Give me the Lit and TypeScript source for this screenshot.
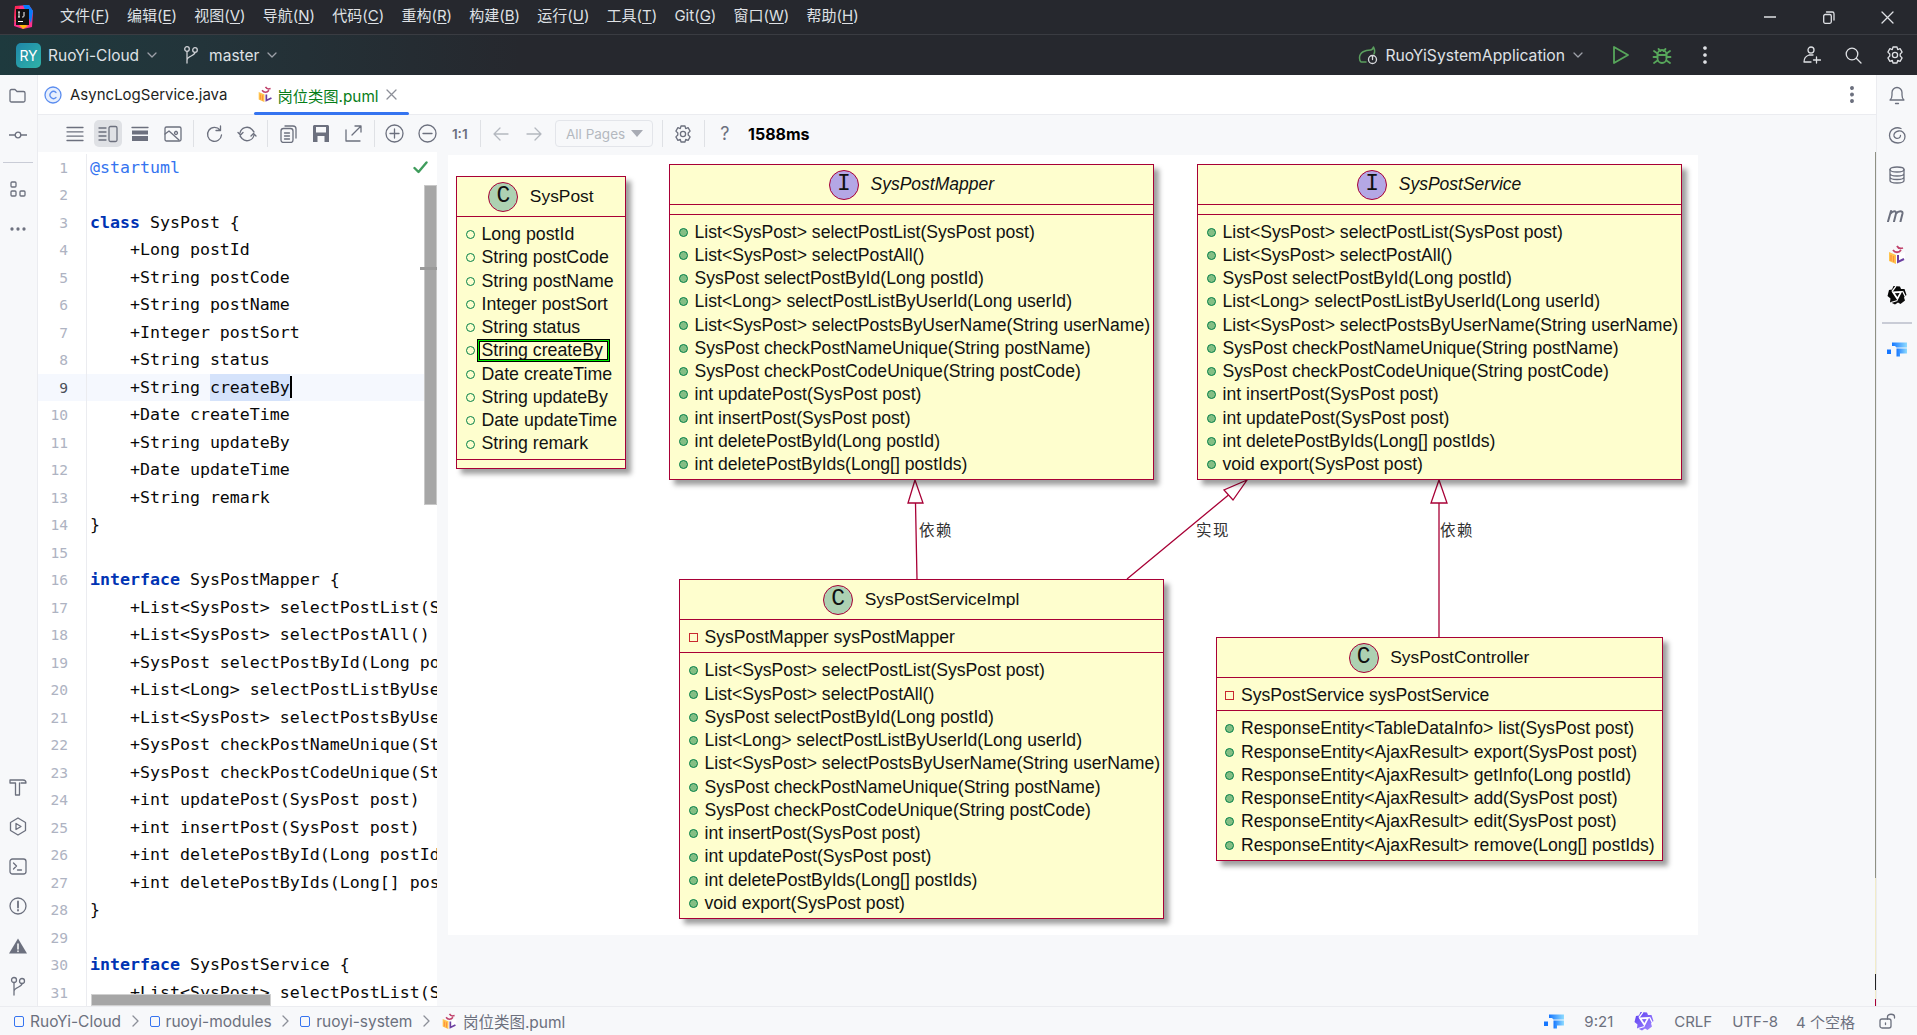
import { LitElement, html, css, svg } from "lit";
import { customElement } from "lit/decorators.js";

const ico = (w: number, h: number, body: unknown, vb = `0 0 ${w} ${h}`) =>
  html`<svg class="ic" width=${w} height=${h} viewBox=${vb} fill="none" stroke="currentColor" stroke-width="1.3" stroke-linecap="round" stroke-linejoin="round">${body}</svg>`;

const chevron = ico(12, 12, svg`<path d="M2 4l4 4 4-4"/>`);
const branch = ico(16, 20, svg`<circle cx="4" cy="4" r="2.3"/><circle cx="12" cy="5" r="2.3"/><path d="M4 6.3V18M12 7.3c0 4-8 3.5-8 8"/>`);
const gear = ico(20, 20, svg`<path d="M8 2h4l.7 2.6 2.4-.9 2 3.4-1.9 1.9.0 2 1.9 1.9-2 3.4-2.4-.9L12 18H8l-.7-2.6-2.4.9-2-3.4 1.9-1.9V9L2.900 7.100l2-3.400 2.400.9z"/><circle cx="10" cy="10" r="2.600"/>`);
const umlCube = (s: number) => html`<svg class="ic" width=${s} height=${s} viewBox="0 0 20 20">
  <path d="M2 7l7 3v9l-7-3z" fill="#ffc44d"/><path d="M4 10v6M6.500 11v6" stroke="#ff8f3f" stroke-width="1.200"/>
  <path d="M9 10l9-3v7l-9 5z" fill="#fff"/><path d="M11 10v7l6-3" fill="none" stroke="#6b3fa0" stroke-width="2"/>
  <path d="M6 5c2 3 6 3 8 0M10 1c1 2 3 3 6 2" fill="none" stroke="#c0406a" stroke-width="1.800"/></svg>`;
const blueMark = html`<svg class="ic" width="20" height="15" viewBox="0 0 20 15">
  <defs><linearGradient id="bm" x1="0" x2="1"><stop offset="0" stop-color="#1677ff"/><stop offset="1" stop-color="#8fdcff"/></linearGradient></defs>
  <rect x="0" y="7.500" width="4" height="4.500" fill="#1677ff"/><path d="M5 0h15v5H9.500L8 3.500H5z" fill="url(#bm)" transform="translate(0 .5)"/><path d="M9.500 6.500H20v5h-7v3H9.500z" fill="url(#bm)"/></svg>`;
const star = (c1: string, c2: string, id: string) => html`<svg class="ic" width="20" height="20" viewBox="0 0 20 20">
  <defs><linearGradient id=${id} x1="0" y1="0" x2="1" y2="1"><stop offset="0" stop-color=${c1}/><stop offset="1" stop-color=${c2}/></linearGradient></defs>
  <path d="M6.500 1L13 1.500 14 4l3.500 0L19.500 10 17 12.500 18 15.500 13.500 19 11 17.500 8 19.500 3 17 3.500 13.500.5 11 2 5 5 4.500z" fill=${`url(#${id})`}/>
  <path d="M4.500 6.500l11-.5-5 9.500zM7.800 8.200l2.600 3.900 2.200-4.200z" fill="#fff" fill-rule="evenodd"/><path d="M5 6.500L9 1.200M15.500 6l3.500 7M10.500 15.500L4 17.500" stroke="#fff" stroke-width="1.300"/></svg>`;

const CODE: string[] = [
  "@startuml", "", "class SysPost {", "    +Long postId", "    +String postCode", "    +String postName", "    +Integer postSort",
  "    +String status", "    +String createBy", "    +Date createTime", "    +String updateBy", "    +Date updateTime", "    +String remark",
  "}", "", "interface SysPostMapper {", "    +List<SysPost> selectPostList(SysPost post)", "    +List<SysPost> selectPostAll()",
  "    +SysPost selectPostById(Long postId)", "    +List<Long> selectPostListByUserId(Long userId)", "    +List<SysPost> selectPostsByUserName(String userName)",
  "    +SysPost checkPostNameUnique(String postName)", "    +SysPost checkPostCodeUnique(String postCode)", "    +int updatePost(SysPost post)",
  "    +int insertPost(SysPost post)", "    +int deletePostById(Long postId)", "    +int deletePostByIds(Long[] postIds)", "}", "",
  "interface SysPostService {", "    +List<SysPost> selectPostList(SysPost post)",
];

const codeLine = (t: string, i: number) => {
  if (i === 0) return html`<span class="meta">${t}</span>`;
  if (i === 8) return html`    +String <span class="sel">createBy</span><span class="caret"></span>`;
  const m = t.match(/^(class|interface)( .*)$/);
  if (m) return html`<span class="kw">${m[1]}</span>${m[2]}`;
  return t;
};

const M1 = ["List<SysPost> selectPostList(SysPost post)", "List<SysPost> selectPostAll()", "SysPost selectPostById(Long postId)", "List<Long> selectPostListByUserId(Long userId)", "List<SysPost> selectPostsByUserName(String userName)", "SysPost checkPostNameUnique(String postName)", "SysPost checkPostCodeUnique(String postCode)"];

interface Box { name: string; kind: "C" | "I"; x: number; y: number; w: number; h: number; head: number; attrs?: string[]; field?: string; methods?: string[]; }
const OX = 448, OY = 155;
const BOXES: Box[] = [
  { name: "SysPost", kind: "C", x: 456, y: 176, w: 170, h: 293, head: 40, attrs: ["Long postId", "String postCode", "String postName", "Integer postSort", "String status", "String createBy", "Date createTime", "String updateBy", "Date updateTime", "String remark"] },
  { name: "SysPostMapper", kind: "I", x: 669, y: 164, w: 485, h: 316, head: 40, methods: [...M1, "int updatePost(SysPost post)", "int insertPost(SysPost post)", "int deletePostById(Long postId)", "int deletePostByIds(Long[] postIds)"] },
  { name: "SysPostService", kind: "I", x: 1197, y: 164, w: 484.5, h: 316, head: 40, methods: [...M1, "int insertPost(SysPost post)", "int updatePost(SysPost post)", "int deletePostByIds(Long[] postIds)", "void export(SysPost post)"] },
  { name: "SysPostServiceImpl", kind: "C", x: 679, y: 579, w: 484.5, h: 340, head: 40, field: "SysPostMapper sysPostMapper", methods: [...M1, "int insertPost(SysPost post)", "int updatePost(SysPost post)", "int deletePostByIds(Long[] postIds)", "void export(SysPost post)"] },
  { name: "SysPostController", kind: "C", x: 1215.5, y: 637, w: 447, h: 224, head: 40, field: "SysPostService sysPostService", methods: ["ResponseEntity<TableDataInfo> list(SysPost post)", "ResponseEntity<AjaxResult> export(SysPost post)", "ResponseEntity<AjaxResult> getInfo(Long postId)", "ResponseEntity<AjaxResult> add(SysPost post)", "ResponseEntity<AjaxResult> edit(SysPost post)", "ResponseEntity<AjaxResult> remove(Long[] postIds)"] },
];
const LABELS = [{ t: "依赖", x: 919 }, { t: "实现", x: 1196 }, { t: "依赖", x: 1440 }];

@customElement("app-root")
export class AppRoot extends LitElement {
  static styles = css`
    :host { display: block; width: 1917px; height: 1035px; overflow: hidden; font-family: Inter, "Noto Sans CJK SC", sans-serif; color: #1e1f22; background: #f7f8fa; }
    .ic { display: block; flex: none; }
    .title { height: 34px; background: #26282e; color: #dfe1e5; display: flex; align-items: center; padding-left: 12px; border-bottom: 1px solid #3a3c42; font-size: 15px; }
    .logo { width: 21px; height: 24px; margin-right: 27px; }
    .menu { display: flex; align-items: baseline; gap: 17.200px; flex: 1; line-height: 22px; padding-bottom: 3px; }
    .menu u { text-underline-offset: 2px; }
    .win { display: flex; width: 177px; color: #dfe1e5; }
    .win span { width: 59px; display: flex; justify-content: center; }
    .bar { height: 40px; background: linear-gradient(90deg, #1e3a3e 0, #23343a 200px, #26282e 520px); color: #dfe1e5; display: flex; align-items: center; font-size: 15.500px; padding-left: 16px; }
    .ry { width: 25px; height: 25px; border-radius: 5px; background: linear-gradient(135deg, #1f86a8, #2fb3a8); color: #fff; font-size: 14px; display: flex; align-items: center; justify-content: center; margin-right: 7px; }
    .chev { margin: 0 0 0 7px; color: #9da0a8; }
    .branch { margin: 0 10px 0 25px; color: #cfd1d6; }
    .runcfg { margin-left: auto; display: flex; align-items: center; font-size: 15.700px; }
    .runcfg .spring { margin-right: 7px; }
    .run { margin-left: 27.600px; color: #57a65b; }
    .dbg { margin-left: 22.500px; color: #57a65b; }
    .dots { margin-left: 31.200px; }
    .user { margin-left: 95.700px; }
    .srch { margin-left: 24px; }
    .gear { margin: 0 12px 0 23px; }
    .main { display: flex; height: 931px; }
    .side { width: 38px; flex: none; background: #f7f8fa; border-right: 1px solid #ebecf0; box-sizing: border-box; color: #6c707e; display: flex; flex-direction: column; justify-content: space-between; align-items: center; padding-right: 2px; }
    .side.r { width: 41px; border-right: 0; border-left: 1px solid #ebecf0; justify-content: flex-start; padding-right: 0; }
    .cell { height: 40px; width: 100%; display: flex; align-items: center; justify-content: center; }
    .sep-h { height: 2px; background: #c9ccd6; width: 30px; margin: 7px 0 5px; flex: none; }
    .l .sep-h { width: 30px; margin: 7px 0 6px; height: 1px; }
    .l .cell.tight { height: 39px; }
    .center { flex: 1; min-width: 0; display: flex; flex-direction: column; }
    .tabs { height: 39px; background: #fff; border-bottom: 1px solid #ebecf0; display: flex; align-items: center; font-size: 15px; position: relative; flex: none; }
    .tab { height: 39px; display: flex; align-items: center; position: relative; box-sizing: border-box; }
    .tab.a { width: 155px; padding-left: 3px; color: #067d17; margin-left: 27px; font-size: 15.300px; }
    .tab.a::after { content: ""; position: absolute; left: 0; right: 0; bottom: -1px; height: 3.500px; background: #3574f0; border-radius: 2px; }
    .tab.j { padding-left: 6px; }
    .tab.j .cicon { margin-right: 8px; }
    .tab.a .cube { margin-right: 3px; }
    .x { margin-left: 7px; color: #8c8f98; }
    .tabs .more { margin-left: auto; margin-right: 22px; color: #6c707e; }
    .tools { height: 37px; display: flex; align-items: center; padding-left: 21px; flex: none; color: #6c707e; }
    .tb { width: 32.500px; height: 27px; display: flex; align-items: center; justify-content: center; border-radius: 5px; flex: none; }
    .tb.on { background: #dfe1e5; width: 28px; margin: 0 2.250px; }
    .tb.dim { color: #b4b8bf; }
    .one { font-size: 13.500px; font-weight: 600; color: #6c707e; }
    .vs { width: 1px; height: 27px; background: #dfe1e5; margin: 0 4px; flex: none; }
    .combo { width: 98px; height: 27px; box-sizing: border-box; margin-left: 5px; margin-right: 5px; border: 1.500px solid #e3e5ea; border-radius: 4px; color: #b4b8bf; font-size: 13.500px; display: flex; align-items: center; justify-content: space-between; padding: 0 9px 0 10px; }
    .tri { width: 0; height: 0; border-left: 6px solid transparent; border-right: 6px solid transparent; border-top: 7px solid #a8abb4; }
    .q { font-size: 18px; color: #6c707e; }
    .ms { font-size: 16px; font-weight: 700; color: #000; margin-left: 7px; }
    .body { flex: 1; display: flex; min-height: 0; }
    .editor { width: 399px; flex: none; background: #fff; position: relative; overflow: hidden; padding-top: 1.500px; box-sizing: border-box; }
    .row { display: flex; height: 27.500px; line-height: 27.500px; }
    .row.cur { background: #f5f8fe; }
    .num { width: 49px; box-sizing: border-box; flex: none; text-align: right; padding-right: 18px; font: 14.600px/27.500px "DejaVu Sans Mono", monospace; color: #aeb3c2; border-right: 1px solid #ebecf0; }
    .row.cur .num { color: #4b4f59; }
    .code { padding-left: 3px; white-space: pre; font: 16.600px/27.500px "DejaVu Sans Mono", monospace; color: #080808; letter-spacing: 0; }
    .meta { color: #3574f0; }
    .kw { color: #0033b3; font-weight: 700; }
    .sel { background: #d5e3fb; display: inline-block; }
    .caret { display: inline-block; width: 2px; height: 22px; background: #000; vertical-align: -5px; margin-right: -2px; }
    .check { position: absolute; left: 375px; top: 9px; color: #3f9c5c; }
    .vbar { position: absolute; left: 386px; top: 33px; width: 13px; height: 320px; box-sizing: border-box; background: #a6a6a6; border: 1px solid #c8c8c8; }
    .tick { position: absolute; left: 382px; top: 115px; width: 17px; height: 3px; background: #9a9a9a; }
    .hbar { position: absolute; left: 53px; bottom: 0; width: 180px; height: 12px; box-sizing: border-box; background: #a6a6a6; border: 1px solid #d0d0d0; }
    .preview { flex: 1; min-width: 0; padding: 3px 0 0 11px; position: relative; }
    .line { position: absolute; right: 0; top: 0; bottom: 0; width: 1px; background: linear-gradient(#8f9184 0, #8f9184 85%, #f2ecc8 85%, #f2ecc8 96.300%, #222 96.300%, #222 98.100%, #f2ecc8 98.100%, #f2ecc8 99.200%, #a80036 99.200%); }
    .canvas { width: 1250px; height: 780px; background: #fff; position: relative; }
    .wires { position: absolute; left: 0; top: 0; }
    .cls { position: absolute; box-sizing: border-box; border: 1.500px solid #a80036; background: #fefece; box-shadow: 5px 5px 5px rgba(0,0,0,.38); font-family: "Liberation Sans", Arial, sans-serif; color: #111; font-size: 17.600px; white-space: nowrap; display: flex; flex-direction: column; }
    .cls.attrs { font-size: 17.750px; }
    .head { display: flex; align-items: center; justify-content: center; gap: 11.500px; flex: none; font-size: 17.400px; box-sizing: border-box; }
    .head.i { font-style: italic; font-size: 17.500px; }
    .badge { width: 30px; height: 30px; box-sizing: border-box; border-radius: 50%; border: 1.500px solid #a80036; display: flex; align-items: center; justify-content: center; font: 400 23px/1 "Liberation Mono", monospace; color: #111; font-style: normal; }
    .badge.C { background: #add1b2; }
    .badge.I { background: #b4a7e5; }
    .sec { border-top: 1.500px solid #a80036; padding: 6px 0 3px; flex: none; }
    .sec.empty { padding: 0; height: 9.500px; box-sizing: border-box; }
    .mem { height: 23.270px; line-height: 23.270px; display: flex; align-items: center; padding-left: 8.500px; position: relative; }
    .d { width: 9px; height: 9px; box-sizing: border-box; border-radius: 50%; margin-right: 7px; flex: none; border: 1.500px solid #038048; }
    .d.m { background: #84be84; }
    .d.s { border-radius: 0; border-color: #c82930; }
    .hl { position: absolute; left: 20px; top: 0; width: 133px; height: 23px; box-sizing: border-box; border: 1px solid #000; box-shadow: inset 0 0 0 1px #00f000, inset 0 0 0 2px #000; }
    .lbl { position: absolute; font: 15.500px/20px "Noto Sans CJK SC", sans-serif; letter-spacing: 1.500px; color: #333; }
    .status { height: 29px; box-sizing: border-box; border-top: 1px solid #ebecf0; background: #f7f8fa; color: #6c707e; display: flex; align-items: center; font-size: 15.500px; padding-left: 14px; }
    .crumb { display: flex; align-items: center; }
    .sq { width: 8px; height: 9px; border: 1.500px solid #3574f0; border-radius: 2px; margin-right: 6px; }
    .gt { margin: 0 11px 0 10.500px; color: #8c8f98; }
    .fname { margin-left: 5px; }
    .st-r { margin-left: auto; display: flex; align-items: center; color: #6c707e; font-size: 15px; }
    .st-r .nine { margin: 0 21px 0 20px; }
    .st-r .crlf { margin: 0 20px 0 20px; }
    .st-r .utf { margin-right: 18px; }
    .st-r .lock { margin: 0 21px 0 24px; }
  `;

  private tb(body: unknown, cls = "") { return html`<span class="tb ${cls}">${body}</span>`; }

  private box(b: Box) {
    const row = (t: string, k: string) => html`<div class="mem"><span class="d ${k}"></span>${t}${t === "String createBy" ? html`<span class="hl"></span>` : ""}</div>`;
    return html`<div class="cls ${b.attrs ? "attrs" : ""}" style="left:${b.x - OX}px;top:${b.y - OY}px;width:${b.w}px;height:${b.h}px">
      <div class="head ${b.kind === "I" ? "i" : ""}" style="height:${b.head - 1}px"><span class="badge ${b.kind}">${b.kind}</span><span>${b.name}</span></div>
      ${b.attrs ? html`<div class="sec">${b.attrs.map((a) => row(a, ""))}</div><div class="sec empty"></div>` : ""}
      ${b.kind === "I" ? html`<div class="sec empty"></div>` : ""}
      ${b.field ? html`<div class="sec">${row(b.field, "s")}</div>` : ""}
      ${b.methods ? html`<div class="sec">${b.methods.map((a) => row(a, "m"))}</div>` : ""}
    </div>`;
  }

  render() {
    const menu: [string, string][] = [["文件", "F"], ["编辑", "E"], ["视图", "V"], ["导航", "N"], ["代码", "C"], ["重构", "R"], ["构建", "B"], ["运行", "U"], ["工具", "T"], ["Git", "G"], ["窗口", "W"], ["帮助", "H"]];
    return html`
    <div class="title">
      <svg class="logo" viewBox="0 0 21 24"><path d="M3 1l14-1 4 6-1 16-9 2-9-3z" fill="#ff318c"/><path d="M11 0l6 0 4 6-2 12z" fill="#087cfa"/><path d="M3 1l5 0-6 14z" fill="#fe2857"/><path d="M2 15l9 9 5-3z" fill="#fdb60d"/><rect x="4" y="4" width="13" height="16" fill="#111"/><path d="M7 7v5M6 7h2M6 12h2M12 7v4c0 1-1 1-2 1" stroke="#fff" stroke-width="1" fill="none"/><rect x="6" y="16" width="5" height="1" fill="#fff"/></svg>
      <div class="menu">${menu.map(([a, b]) => html`<span>${a}(<u>${b}</u>)</span>`)}</div>
      <div class="win">
        <span>${ico(12, 12, svg`<path d="M0 6h12"/>`)}</span>
        <span>${ico(12, 13, svg`<rect x=".7" y="3.500" width="7.600" height="8.800" rx="1.500"/><path d="M3.500 1h5.800c1 0 1.700.7 1.700 1.700v6.300"/>`)}</span>
        <span>${ico(13, 13, svg`<path d="M1 1l11 11M12 1L1 12"/>`)}</span>
      </div>
    </div>
    <div class="bar">
      <span class="ry">RY</span><span>RuoYi-Cloud</span><span class="chev">${chevron}</span>
      <span class="branch">${branch}</span><span>master</span><span class="chev">${chevron}</span>
      <div class="runcfg">
        <span class="spring">${ico(20, 20, svg`<path d="M1.500 13c0-6 6-8 11-8 1.500 0 2.500-1.500 3-3 1 2 1.500 5 .5 7M3 17c-1-1-1.500-2.500-1.500-4M3 17h5" stroke="#5a9e5e" stroke-width="1.500"/><circle cx="14.500" cy="14.500" r="4" stroke="#d8dade"/><path d="M14.500 11.500v3" stroke="#d8dade"/>`)}</span>
        <span>RuoYiSystemApplication</span><span class="chev">${chevron}</span>
        <span class="run">${ico(18, 20, svg`<path d="M2 2l14 8-14 8z" stroke-width="1.800"/>`)}</span>
        <span class="dbg">${ico(20, 20, svg`<rect x="5.500" y="5" width="9" height="13" rx="4.500" stroke-width="1.800"/><path d="M6.500 4l2 2M13.500 4l-2 2M2 6l3.500 2.500M18 6l-3.500 2.500M1.500 12h4M14.500 12h4M2 18l3.500-2.500M18 18l-3.500-2.500M5.500 10h9" stroke-width="1.800"/>`)}</span>
        <span class="dots">${ico(4, 18, svg`<circle cx="2" cy="2" r="1.200" fill="currentColor"/><circle cx="2" cy="9" r="1.200" fill="currentColor"/><circle cx="2" cy="16" r="1.200" fill="currentColor"/>`)}</span>
        <span class="user">${ico(18, 18, svg`<circle cx="8" cy="4" r="3"/><path d="M1 16c0-3.500 2-6 5-7h4M13.500 11v6M10.500 14h7M1 16h7"/>`)}</span>
        <span class="srch">${ico(17, 17, svg`<circle cx="7" cy="7" r="5.800"/><path d="M11.500 11.500L16 16"/>`)}</span>
        <span class="gear">${gear}</span>
      </div>
    </div>
    <div class="main">
      <div class="side l">
        <div>
          <div class="cell">${ico(17, 15, svg`<path d="M1 3c0-1 .5-1.500 1.500-1.500H6l2 2h6.500c1 0 1.500.5 1.500 1.500v7.500c0 1-.5 1.500-1.500 1.500h-12c-1 0-1.500-.5-1.500-1.500z"/>`)}</div>
          <div class="cell">${ico(18, 10, svg`<circle cx="9" cy="5" r="2.800"/><path d="M0 5h6M12 5h6"/>`)}</div>
          <div class="sep-h"></div>
          <div class="cell">${ico(16, 16, svg`<rect x="1" y="1" width="5" height="5" rx="1"/><rect x="1" y="10" width="5" height="5" rx="1"/><rect x="10" y="10" width="5" height="5" rx="1"/>`)}</div>
          <div class="cell tight">${ico(16, 4, svg`<circle cx="2" cy="2" r="1" fill="currentColor"/><circle cx="8" cy="2" r="1" fill="currentColor"/><circle cx="14" cy="2" r="1" fill="currentColor"/>`)}</div>
        </div>
        <div>
          <div class="cell">${ico(18, 19, svg`<path d="M1 3h13c2 0 3 1.500 3 3h-5v0M1 3v3h5.500M6.500 6v12h4V6"/>`)}</div>
          <div class="cell">${ico(18, 19, svg`<path d="M9 1l7.500 4.500v8L9 18l-7.500-4.500v-8z"/><path d="M7 6.500l5 3-5 3z"/>`)}</div>
          <div class="cell">${ico(18, 17, svg`<rect x="1" y="1" width="16" height="15" rx="2.500"/><path d="M4.500 5l3 3-3 3M8.500 12h4"/>`)}</div>
          <div class="cell">${ico(18, 18, svg`<circle cx="9" cy="9" r="8"/><path d="M9 4.500v6M9 13v.5" stroke-width="1.800"/>`)}</div>
          <div class="cell">${ico(18, 16, svg`<path d="M9 .5l9 15H0z" fill="currentColor" stroke="none"/><path d="M9 6v5M9 13v.5" stroke="#fff" stroke-width="1.500"/>`)}</div>
          <div class="cell">${ico(16, 20, svg`<circle cx="4" cy="4" r="2.500"/><circle cx="12" cy="5" r="2.500"/><path d="M4 6.500V19M12 7.500c0 4-8 3.500-8 8"/>`)}</div>
        </div>
      </div>
      <div class="center">
        <div class="tabs">
          <div class="tab j"><span class="cicon">${ico(18, 18, svg`<circle cx="9" cy="9" r="8" stroke="#5b8def" fill="#e7effd"/><path d="M12 6.500a3.500 3.500 0 1 0 0 5" stroke="#5b8def"/>`)}</span>AsyncLogService.java</div>
          <div class="tab a"><span class="cube">${umlCube(17)}</span>岗位类图.puml<span class="x">${ico(11, 11, svg`<path d="M1 1l9 9M10 1l-9 9"/>`)}</span></div>
          <span class="more">${ico(4, 17, svg`<circle cx="2" cy="2" r="1.300" fill="currentColor"/><circle cx="2" cy="8.500" r="1.300" fill="currentColor"/><circle cx="2" cy="15" r="1.300" fill="currentColor"/>`)}</span>
        </div>
        <div class="tools">
          ${this.tb(ico(18, 16, svg`<path d="M1 1.500h16M1 5.800h16M1 10.200h16M1 14.500h16"/>`))}
          ${this.tb(ico(20, 18, svg`<path d="M1 3h7M1 7h7M1 11h7M1 15h7"/><rect x="11" y="1.500" width="8" height="15" rx="1.500"/>`), "on")}
          ${this.tb(ico(18, 16, svg`<path d="M1 1.500h16" /><rect x="1" y="4.500" width="16" height="4" fill="currentColor" stroke="none"/><rect x="1" y="10" width="16" height="5" fill="currentColor" stroke="none"/>`))}
          ${this.tb(ico(18, 18, svg`<rect x="1" y="2" width="16" height="14" rx="1.500"/><path d="M1 9l4-3 10 9M12 6.500a1.500 1.500 0 1 0 .01 0"/>`))}
          <span class="vs"></span>
          ${this.tb(ico(18, 18, svg`<path d="M15 5a7 7 0 1 0 1.500 5M15.500 1v4.500H11"/>`))}
          ${this.tb(ico(20, 18, svg`<path d="M3 8a7 7 0 0 1 12-3.500L17 7M17 10a7 7 0 0 1-12 3.500L3 11M1 7.500l2.500 2.500 2.500-2.500M14 11l2.500-2.500L19 11"/>`))}
          <span class="vs"></span>
          ${this.tb(ico(17, 18, svg`<rect x="1" y="3.500" width="12" height="14" rx="2.500"/><path d="M5 1h8c2 0 3 1 3 3v9M4.500 8h5M4.500 11h5M4.500 14h5"/>`))}
          ${this.tb(ico(16, 17, svg`<path d="M0 1.500C0 .7.700 0 1.500 0h13c.8 0 1.500.7 1.500 1.500V17H0zM3 2v5.500h10V2zM4.500 11v6h7v-6z" fill="currentColor" fill-rule="evenodd" stroke="none"/>`))}
          ${this.tb(ico(17, 17, svg`<path d="M1 5v11h14M7 10l9-9M10 1h6v6"/>`))}
          <span class="vs"></span>
          ${this.tb(ico(19, 19, svg`<circle cx="9.500" cy="9.500" r="8.500"/><path d="M5 9.500h9M9.500 5v9"/>`))}
          ${this.tb(ico(19, 19, svg`<circle cx="9.500" cy="9.500" r="8.500"/><path d="M5 9.500h9"/>`))}
          ${this.tb(html`<span class="one">1:1</span>`)}
          <span class="vs"></span>
          ${this.tb(ico(16, 14, svg`<path d="M15 7H1M7 1L1 7l6 6"/>`), "dim")}
          ${this.tb(ico(16, 14, svg`<path d="M1 7h14M9 1l6 6-6 6"/>`), "dim")}
          <span class="combo">All Pages<span class="tri"></span></span>
          <span class="vs"></span>
          ${this.tb(gear)}
          <span class="vs"></span>
          ${this.tb(html`<span class="q">?</span>`)}
          <span class="ms">1588ms</span>
        </div>
        <div class="body">
          <div class="editor">
            ${CODE.map((t, i) => html`<div class="row ${i === 8 ? "cur" : ""}"><span class="num">${i + 1}</span><span class="code">${codeLine(t, i)}</span></div>`)}
            <span class="check">${ico(15, 13, svg`<path d="M1.500 7l4 4 8-9.500" stroke-width="2.400"/>`)}</span>
            <div class="vbar"></div><div class="tick"></div><div class="hbar"></div>
          </div>
          <div class="preview">
            <div class="canvas">
              <svg class="wires" width="1250" height="780" viewBox="${OX} ${OY} 1250 780" fill="none" stroke="#a80036" stroke-width="1.300">
                <path d="M915.500 503L917 579M1228.500 495L1127 579M1439 503V637"/>
                <path d="M915 480L908 503H923zM1247 480L1224 490 1233 500zM1439 480L1431 503H1447z" fill="#fff"/>
              </svg>
              ${BOXES.map((b) => this.box(b))}
              ${LABELS.map((l) => html`<span class="lbl" style="left:${l.x - OX}px;top:${519 - OY}px">${l.t}</span>`)}
            </div>
            <div class="line"></div>
          </div>
        </div>
      </div>
      <div class="side r">
        <div class="cell">${ico(18, 20, svg`<path d="M2 15c1.500-1 2-2.500 2-5V7.500a5 5 0 0 1 10 0V10c0 2.500.5 4 2 5zM7.500 18.500h3"/>`)}</div>
        <div class="cell">${ico(18, 18, svg`<path d="M13 2.500C8 .5 1.500 3 1.500 9.500c0 5 4 7.500 8.500 7.500 4.500 0 7-3 7-6.500 0-3.500-3-6-6.500-5.500-3 .5-5 2.500-4.500 5 .5 2 3 3 5 2 1-.5 1.500-1.500 1.500-2.500"/>`)}</div>
        <div class="cell">${ico(16, 18, svg`<ellipse cx="8" cy="3.500" rx="7" ry="2.500"/><path d="M1 3.500v11c0 1.400 3 2.500 7 2.500s7-1.100 7-2.500v-11M1 7.500c0 1.400 3 2.500 7 2.500s7-1.100 7-2.500M1 11c0 1.400 3 2.500 7 2.500s7-1.100 7-2.500"/>`)}</div>
        <div class="cell">${ico(20, 14, svg`<path d="M1 13.500L4 3M3.500 5.500c2.500-3 6-3 5.500 0L7 13.500M9 5.500c2.500-3 7-3 6.500 0L13.500 13.500" stroke-width="2"/>`)}</div>
        <div class="cell">${umlCube(20)}</div>
        <div class="cell">${star("#000", "#111", "s2")}</div>
        <div class="sep-h"></div>
        <div class="cell">${blueMark}</div>
      </div>
    </div>
    <div class="status">
      <span class="crumb"><span class="sq"></span>RuoYi-Cloud</span><span class="gt">${ico(7, 12, svg`<path d="M1 1l5 5-5 5"/>`)}</span>
      <span class="crumb"><span class="sq"></span>ruoyi-modules</span><span class="gt">${ico(7, 12, svg`<path d="M1 1l5 5-5 5"/>`)}</span>
      <span class="crumb"><span class="sq"></span>ruoyi-system</span><span class="gt">${ico(7, 12, svg`<path d="M1 1l5 5-5 5"/>`)}</span>
      <span class="crumb">${umlCube(17)}<span class="fname">岗位类图.puml</span></span>
      <div class="st-r">
        ${blueMark}<span class="nine">9:21</span>${star("#5a3df0", "#a58bff", "s1")}<span class="crlf">CRLF</span><span class="utf">UTF-8</span><span>4 个空格</span>
        <span class="lock">${ico(17, 16, svg`<rect x="1" y="6" width="11" height="9" rx="2"/><path d="M8.500 6V3.500c0-3 7-3 7 0V5M6.500 10v1.500" />`)}</span>
      </div>
    </div>`;
  }
}
